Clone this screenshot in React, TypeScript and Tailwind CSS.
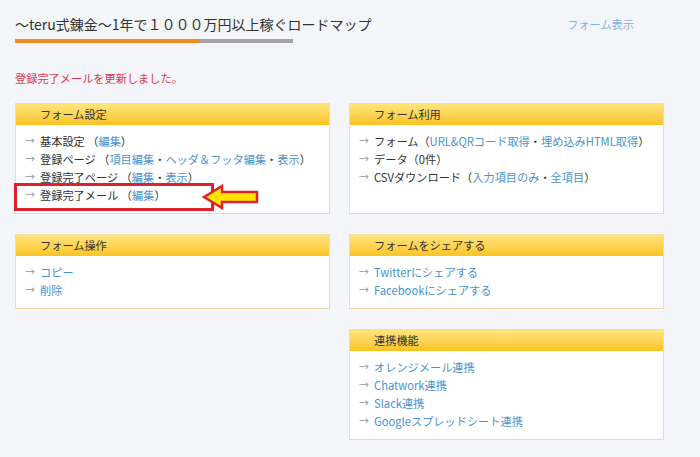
const font = { fontFamily: '"Noto Sans CJK JP", "Noto Sans", sans-serif' };

type Part = { text: string; link?: boolean };

function Item({ parts }: { parts: Part[] }) {
  return (
    <li className="flex items-center h-[18px] leading-[18px] whitespace-nowrap">
      <span className="w-[15px] text-[10px] text-[#999]">→</span>
      <span>
        {parts.map((p, i) =>
          p.link ? (
            <span key={i} className="text-[#4a93cf]">
              {p.text}
            </span>
          ) : (
            <span key={i}>{p.text}</span>
          )
        )}
      </span>
    </li>
  );
}

function Card({
  title,
  children,
  className = "",
}: {
  title: string;
  children: React.ReactNode;
  className?: string;
}) {
  return (
    <div className={`flex flex-col border border-[#efdca6] bg-white ${className}`}>
      <div className="h-[21px] bg-gradient-to-b from-[#ffe47a] to-[#fbc41a] pl-[24px] text-[11.2px] leading-[21px] text-[#333]">
        {title}
      </div>
      <ul className="flex-1 px-[9px] pt-[7px] pb-[9px] text-[11.2px] text-[#333]">{children}</ul>
    </div>
  );
}

function Arrow() {
  return (
    <svg width="58" height="26" viewBox="0 0 58 26" className="absolute left-[202px] top-[184px]">
      <polygon
        points="2,13 20,2 20,8 55,8 55,18 20,18 20,24"
        fill="#ffe500"
        stroke="#e0202a"
        strokeWidth="2.5"
        strokeLinejoin="miter"
      />
    </svg>
  );
}

export default function App() {
  return (
    <div className="relative w-[700px] h-[457px] overflow-hidden bg-[#f4f5f9] text-[#333]" style={font}>
      <div className="flex items-start justify-between pl-[15px] pr-[66px] pt-[13px]">
        <div>
          <div className="text-[14px] leading-[22px]">〜teru式錬金〜1年で１０００万円以上稼ぐロードマップ</div>
          <div className="mt-[4px] flex h-[4px] w-[278px]">
            <div className="w-[185px] bg-[#f08a24]" />
            <div className="flex-1 bg-[#a3a3a3]" />
          </div>
        </div>
        <div className="pt-[3px] text-[11.2px] text-[#7fb2df]">フォーム表示</div>
      </div>

      <div className="mt-[26px] pl-[15px] text-[11.2px] leading-[18px] text-[#e0354f]">
        登録完了メールを更新しました。
      </div>

      <div className="mt-[16px] ml-[15px] grid grid-cols-[315px_315px] gap-x-[19px] gap-y-[20px]">
        <Card title="フォーム設定">
          <Item parts={[{ text: "基本設定 （" }, { text: "編集", link: true }, { text: "）" }]} />
          <Item
            parts={[
              { text: "登録ページ （" },
              { text: "項目編集", link: true },
              { text: "・" },
              { text: "ヘッダ＆フッタ編集", link: true },
              { text: "・" },
              { text: "表示", link: true },
              { text: "）" },
            ]}
          />
          <Item
            parts={[
              { text: "登録完了ページ （" },
              { text: "編集", link: true },
              { text: "・" },
              { text: "表示", link: true },
              { text: "）" },
            ]}
          />
          <Item parts={[{ text: "登録完了メール （" }, { text: "編集", link: true }, { text: "）" }]} />
        </Card>
        <Card title="フォーム利用">
          <Item
            parts={[
              { text: "フォーム（" },
              { text: "URL&QRコード取得", link: true },
              { text: "・" },
              { text: "埋め込みHTML取得", link: true },
              { text: "）" },
            ]}
          />
          <Item parts={[{ text: "データ（0件）" }]} />
          <Item
            parts={[
              { text: "CSVダウンロード（" },
              { text: "入力項目のみ", link: true },
              { text: "・" },
              { text: "全項目", link: true },
              { text: "）" },
            ]}
          />
        </Card>
        <Card title="フォーム操作">
          <Item parts={[{ text: "コピー", link: true }]} />
          <Item parts={[{ text: "削除", link: true }]} />
        </Card>
        <Card title="フォームをシェアする">
          <Item parts={[{ text: "Twitterにシェアする", link: true }]} />
          <Item parts={[{ text: "Facebookにシェアする", link: true }]} />
        </Card>
        <Card title="連携機能" className="col-start-2">
          <Item parts={[{ text: "オレンジメール連携", link: true }]} />
          <Item parts={[{ text: "Chatwork連携", link: true }]} />
          <Item parts={[{ text: "Slack連携", link: true }]} />
          <Item parts={[{ text: "Googleスプレッドシート連携", link: true }]} />
        </Card>
      </div>

      {/* highlight box + arrow */}
      <div className="absolute left-[14px] top-[183px] h-[28px] w-[200px] border-[3px] border-[#e0202a]" />
      <Arrow />
    </div>
  );
}
